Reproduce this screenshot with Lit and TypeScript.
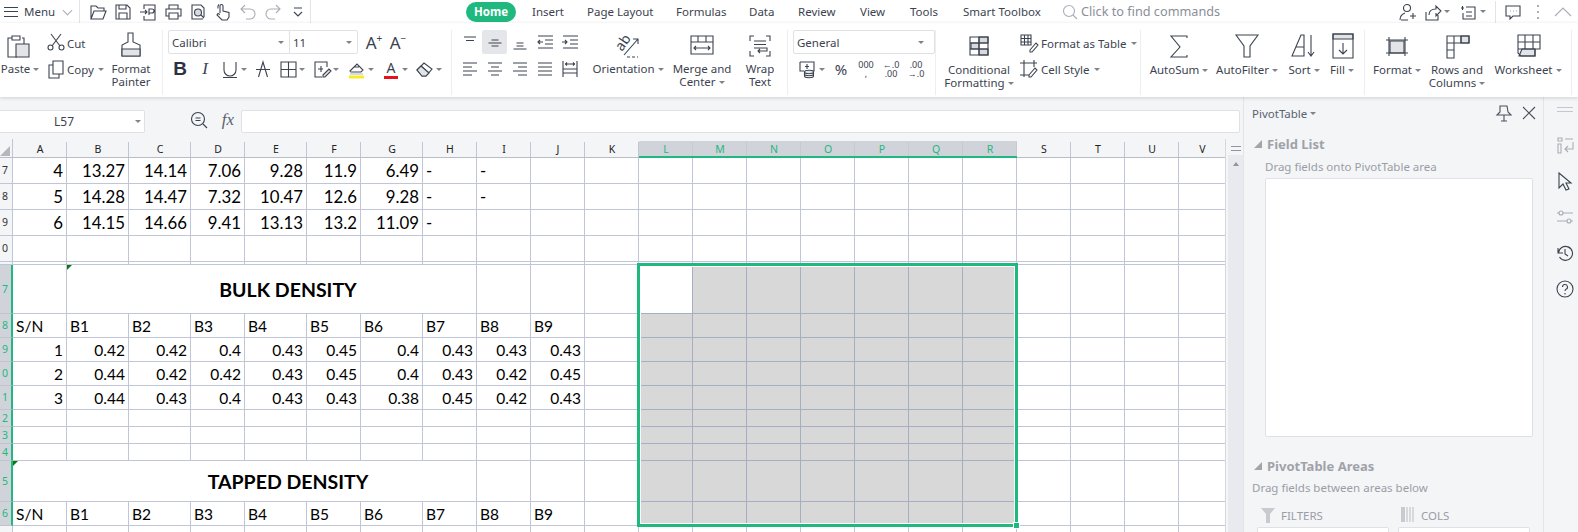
import { LitElement, html, css, svg } from 'lit';
import { customElement } from 'lit/decorators.js';

const ICONS: Record<string, unknown> = {
  open: svg`<path d="M3 17V4h5l2 2h6v3M3 17l3-8h12l-3 8z"/>`,
  save: svg`<path d="M3 3h11l3 3v11H3zM6 3v4h7V3M6 17v-6h8v6"/>`,
  pdf: svg`<path d="M6 7V3h11v15H6v-4M2 10h7M7 8l2 2-2 2M11 13V7h3a2 2 0 0 1 0 4h-3"/>`,
  print: svg`<path d="M6 7V3h9v4M6 14H3V7h15v7h-3M6 11h9v6H6z"/>`,
  preview: svg`<path d="M15 17H4V3h9l3 3v9"/><circle cx="10" cy="10.500" r="3.500" fill="#d8dade"/><path d="M13 13l3 3"/>`,
  hand: svg`<path d="M7 11V4a1.500 1.500 0 0 1 3 0v5l6 1.500V15l-2 3H9l-5-5 1-1.500 2 1M6 2.500a4 4 0 0 0-1 4"/>`,
  undo: svg`<path class="dim" d="M7 3L3 7l4 4M3 7h9a4.500 4.500 0 0 1 0 10H8"/>`,
  redo: svg`<path class="dim" d="M13 3l4 4-4 4M17 7H8a4.500 4.500 0 0 0 0 10h4"/>`,
  more: svg`<path d="M6 6h8M6 10l4 4 4-4"/>`,
  search: svg`<circle cx="9" cy="9" r="5.500"/><path d="M13 13l4 4"/>`,
  user: svg`<circle cx="10" cy="6" r="3.500"/><path d="M3 18c0-4 2-6 5-7M13 14h6M16 11v6M4 18h7"/>`,
  share: svg`<path d="M4 10v8h12v-5M7 13c0-4 3-6 7-6V4l5 5-5 5v-3"/>`,
  note: svg`<path d="M3 6h3M4.500 4v4M8 5h9v12H5v-6M8 10h6M8 14h6"/>`,
  chat: svg`<path d="M3 4h14v10H10l-3 3v-3H3zM7 9h.500M10 9h.500M13 9h.500"/>`,
  kebab: svg`<path class="dim" stroke-width="2" d="M10 3v2M10 9v2M10 15v2"/>`,
  up: svg`<path class="dim" d="M2 14l8-8 8 8"/>`,
  zoomEq: svg`<circle cx="9" cy="9" r="6.500"/><path d="M14 14l4 4M6.500 8h5M6.500 10.500h5"/>`,
  cut: svg`<circle cx="4.500" cy="14.500" r="2.500"/><circle cx="15.500" cy="14.500" r="2.500"/><path d="M6 13L15 1M14 13L5 1"/>`,
  copy: svg`<path d="M7 2h10v13H7zM7 6H3v13h10v-4"/>`,
  under: svg`<path d="M4 3v8a6 6 0 0 0 12 0V3M3 18.500h14"/>`,
  strike: svg`<path d="M3 10.500h14M5.500 18L10 3l4.500 15"/>`,
  bord: svg`<path d="M3 3h15v15H3zM10.500 3v15M3 10.500h15"/>`,
  cellx: svg`<path d="M15 8V3H3v15h7M6 10h5M9 7v6"/><path d="M11 16l6-6 2 2-6 6h-2z" fill="#e2e4e8"/>`,
  fill: svg`<path d="M3 12l7-7 6 6-2 2H4zM7 8h5"/><path d="M3 14h13v2H3z" stroke="none" fill="#d8dade"/><path d="M2 16.500h15v3H2z" stroke="none" fill="#f6ec2a"/>`,
  eraser: svg`<path d="M2 11l7-7 8 6-6 7H7z"/><path d="M6 7l8 7" /><path d="M2 11l5 6h4l3-3-8-7z" fill="#e2e4e8"/>`,
  atop: svg`<path d="M4 5h12M6 8.500h8"/>`,
  amid: svg`<path d="M6.500 8h7M3.500 11h13M6.500 14h7"/>`,
  abot: svg`<path d="M6.500 12h7M6.500 15h7M3.500 18h13" transform="translate(0 -1)"/>`,
  outd: svg`<path d="M3 4h15M10 8h8M10 12h8M3 16h15M8 10H3M5 8l-2 2 2 2"/>`,
  ind: svg`<path d="M3 4h15M10 8h8M10 12h8M3 16h15M2 10h5M5 8l2 2-2 2"/>`,
  left: svg`<path d="M3 4h14M3 8h9M3 12h14M3 16h9"/>`,
  center: svg`<path d="M3 4h14M6 8h8M3 12h14M6 16h8"/>`,
  right: svg`<path d="M3 4h14M8 8h9M3 12h14M8 16h9"/>`,
  just: svg`<path d="M3 4h14M3 8h14M3 12h14M3 16h14"/>`,
  dist: svg`<path d="M3 2v16M17 2v16M6 5h8M7 3.500L5.500 5 7 6.500M13 3.500L14.500 5 13 6.500M3 10h14M3 14h14"/>`,
  coins: svg`<path d="M2 3h14v9h-3M2 3v9h4M9 5v5M7 7.500h4"/><ellipse cx="11" cy="13" rx="4.500" ry="1.700" fill="#e2e4e8"/><path d="M6.500 13v4c0 1 2 1.700 4.500 1.700s4.500-.700 4.500-1.700v-4M6.500 15c0 1 2 1.700 4.500 1.700s4.500-.700 4.500-1.700"/>`,
  tbl: svg`<path d="M2 2h10v10H2zM2 5.500h10M2 9h10M5.500 2v10M9 2v10M11 17l6-7 2 2-6 7h-2z"/>`,
  cstyle: svg`<path d="M5 1v17M15 1v7M1 4h17M1 16h9M10 16l6-7 2 2-6 7h-2z"/>`,
  paste: svg`<path d="M6 6H2v19h9M16 6h2v6M6 4h8v4H6z"/><path d="M10 12h13v13H10z" fill="#e2e4e8"/>`,
  painter: svg`<path d="M12 2h5v9l7 3v11H6V14l6-3z"/><path d="M6 18h18v7H6z" fill="#e2e4e8"/>`,
  merge: svg`<path d="M4 5h22v18H4zM4 11h22M11 5v6M19 5v6M7 17h16M9 15l-2 2 2 2M21 15l2 2-2 2"/>`,
  wrap: svg`<path d="M9 5H5v5M21 5h4v5M9 25H5v-5M21 25h4v-5M9 10h12M9 13.500h12M9 17h13v3h-9M15 18l-2 2 2 2"/>`,
  orient: svg`<text x="9" y="21" transform="rotate(-55 9 21)" class="svgt">ab</text><path d="M11 24L25 8M20 8h5v5"/><path d="M14 26h11" stroke-dasharray="3 2"/>`,
  cond: svg`<path d="M15 6h9v6H15zM15 18h9v6H15zM7 12h8v6H7z" fill="#d8dade"/><path d="M6 6h18v18H6zM6 12h18M6 18h18M15 6v18"/>`,
  sum: svg`<path d="M23 7V5H7l9 11-9 10h16v-2"/>`,
  funnel: svg`<path d="M4 4h22L18 15v11h-6V15z"/>`,
  sort: svg`<path d="M3 25L12 4h3v21zM7 16h8M22 4v20M19 21l3 4 3-4"/>`,
  fillb: svg`<path d="M6 3h20v5H6z" fill="#e2e4e8"/><path d="M6 3h20v24H6zM16 12v11M12 19l4 4 4-4"/>`,
  format: svg`<path d="M8 10h14v12H8z" fill="#e2e4e8"/><path d="M4 9h22M4 22h22M7 6v19M23 6v19"/>`,
  rows: svg`<path d="M19 5h8v7h-8z" fill="#e2e4e8"/><path d="M5 5h22v7H5zM5 5v22h7V5M12 12v7M5 19h7M19 5v7"/>`,
  sheet: svg`<path d="M9 18h13v7H6z" fill="#e2e4e8"/><path d="M5 4h22v14h-5v7H8l-3-3zM5 11h22M12 4v14M20 4v14M5 18h17"/>`,
  pin: svg`<path d="M6 3h7l1 6 3 3H3l3-3zM10 12v6M7 18h6"/>`,
  close: svg`<path d="M4 4l12 12M16 4L4 16"/>`,
  swap: svg`<path class="dim" d="M3 3h4v3H3zM10 4h8M3 9h3v9H3zM18 7v7h-8M13 11l-3 3 3 3"/>`,
  cursor: svg`<path d="M4 2l12 10h-5l3 6-3 1-3-6-4 4z"/>`,
  slide: svg`<path class="dim" d="M2 6h16M2 14h16"/><circle class="dim" cx="6" cy="6" r="2" fill="#f4f5f7"/><circle class="dim" cx="14" cy="14" r="2" fill="#f4f5f7"/>`,
  hist: svg`<path d="M3 5v5h5M3.500 10a7 7 0 1 1 1 4M10 6v5l3 2"/>`,
  help: svg`<circle cx="10" cy="10" r="8"/><path d="M7.500 8a2.500 2.500 0 1 1 3.500 2.300c-.700.400-1 .900-1 1.700M10 14v1.500"/>`,
  tri: svg`<path d="M9 1v8H1z" fill="#a3a5ab" stroke="none"/>`,
  filt: svg`<path d="M2 2h14l-5 6v9H7V8z" fill="#c8cacf" stroke="none"/>`,
  cols: svg`<path d="M2 1h4v15H2z" fill="#c8cacf" stroke="none"/><path d="M8 1v15M11 1v15M14 1v15" stroke="#c0c2c8"/>`,
};

const icon = (name: string, size = 20) =>
  html`<svg class="ic" width=${size} height=${size} viewBox="0 0 ${size} ${size}">${ICONS[name]}</svg>`;
const caret = html`<i class="caret"></i>`;

type SheetRow = { label: string; sel?: boolean; cells?: string[]; large?: boolean; title?: string; span?: number };

const COLS = 'ABCDEFGHIJKLMNOPQRSTUV'.split('');
const BS = ['S/N', 'B1', 'B2', 'B3', 'B4', 'B5', 'B6', 'B7', 'B8', 'B9'];
const ROWS: SheetRow[] = [
  { label: '7', large: true, cells: ['4', '13.27', '14.14', '7.06', '9.28', '11.9', '6.49', '-', '-'] },
  { label: '8', large: true, cells: ['5', '14.28', '14.47', '7.32', '10.47', '12.6', '9.28', '-', '-'] },
  { label: '9', large: true, cells: ['6', '14.15', '14.66', '9.41', '13.13', '13.2', '11.09', '-'] },
  { label: '0' },
  { label: '' },
  { label: '7', sel: true, title: 'BULK DENSITY', span: 7 },
  { label: '8', sel: true, cells: BS },
  { label: '9', sel: true, cells: ['1', '0.42', '0.42', '0.4', '0.43', '0.45', '0.4', '0.43', '0.43', '0.43'] },
  { label: '0', sel: true, cells: ['2', '0.44', '0.42', '0.42', '0.43', '0.45', '0.4', '0.43', '0.42', '0.45'] },
  { label: '1', sel: true, cells: ['3', '0.44', '0.43', '0.4', '0.43', '0.43', '0.38', '0.45', '0.42', '0.43'] },
  { label: '2', sel: true },
  { label: '3', sel: true },
  { label: '4', sel: true },
  { label: '5', sel: true, title: 'TAPPED DENSITY', span: 8 },
  { label: '6', sel: true, cells: BS },
  { label: '' },
];

@customElement('app-root')
export class AppRoot extends LitElement {
  static styles = css`
    :host {
      display: block;
      width: 1578px;
      height: 532px;
      overflow: hidden;
      background: #f4f5f7;
      color: #3c4350;
      font-family: "Noto Sans", sans-serif;
      font-size: 11.5px;
      line-height: 13px;
    }
    .ic { fill: none; stroke: #3c4350; stroke-width: 1.1; flex: none; display: block; overflow: visible; }
    .ic .dim { stroke: #a9adb5; }
    .svgt { font-size: 14px; fill: #3c4350; stroke: none; font-family: "Noto Sans", sans-serif; }
    .caret {
      display: inline-block;
      width: 0;
      height: 0;
      margin-left: 3px;
      vertical-align: 2px;
      border: 3px solid transparent;
      border-top: 3px solid #7d828c;
      border-bottom: 0;
      flex: none;
    }

    .top {
      height: 23px;
      display: flex;
      align-items: center;
      background: #fff;
    }
    .menu { width: 80px; flex: none; display: flex; align-items: center; padding-left: 4px; box-sizing: border-box; height: 23px; border-right: 1px solid #e2e4e8; }
    .burger { width: 14px; height: 10px; border-top: 1px solid #3c4350; border-bottom: 1px solid #3c4350; margin-right: 6px; box-sizing: border-box; }
    .burger::after { content: ""; display: block; height: 1px; margin-top: 3.500px; background: #3c4350; }
    .chev { width: 6px; height: 6px; border: solid #a9adb5; border-width: 0 1px 1px 0; transform: rotate(45deg); margin: -3px 0 0 9px; }
    .quick { width: 231px; flex: none; padding-left: 5px; height: 23px; display: flex; align-items: center; box-sizing: border-box; border-right: 1px solid #e2e4e8; }
    .quick span { width: 25px; display: flex; justify-content: center; }
    .tabs { margin-left: 155px; flex: none; display: grid; grid-template-columns: 66px 55px 89px 73px 49px 62px 50px 53px 97px; align-items: center; color: #3c4350; white-space: nowrap; }
    .tabs .on { background: #1fb97f; color: #fff; font-weight: 700; width: 50px; height: 20px; line-height: 20px; text-align: center; border-radius: 10px; }
    .find { width: 337px; flex: none; display: flex; align-items: center; color: #8a8f99; font-size: 12.7px; }
    .find .ic { stroke: #a9adb5; margin-right: 1px; }
    .acts { display: flex; align-items: center; flex: none; width: 180px; }
    .acts .t { width: 25px; flex: none; }
    .acts .tc { width: 36px; flex: none; display: flex; align-items: center; }
    .acts .tc .caret { margin-left: 2px; }
    .vd { width: 1px; height: 22px; background: #e2e4e8; margin: 0 7px 0 1px; flex: none; }

    .ribbon {
      position: relative;
      z-index: 2;
      height: 74px;
      padding-top: 7px;
      box-sizing: border-box;
      display: flex;
      align-items: flex-start;
      background: #fff;
      box-shadow: 0 1px 4px rgba(0, 0, 0, 0.16);
    }
    .grp { height: 65px; display: flex; border-right: 1px solid #eceef0; box-sizing: border-box; flex: none; }
    .g1 { width: 163px; }
    .g2 { width: 289px; padding-left: 5px; flex-direction: column; }
    .g3 { width: 336px; padding-left: 5px; }
    .g4 { width: 148px; padding-left: 5px; flex-direction: column; }
    .g5 { width: 205px; padding-left: 7px; }
    .g6 { width: 224px; padding-left: 8px; }
    .g7 { width: 207px; padding-left: 6px; }
    .big { display: flex; flex-direction: column; align-items: center; text-align: center; flex: none; white-space: nowrap; }
    .big .bi { height: 32px; display: flex; align-items: center; justify-content: center; }
    .low .lbl { padding-top: 1px; }
    .w-paste { width: 40px; }
    .w-paint { width: 38px; }
    .w-orient { width: 70px; margin-left: 11px; }
    .w-merge { width: 64px; margin-left: 7px; }
    .w-wrap { width: 40px; margin-left: 6px; }
    .w-cond { width: 72px; }
    .w-sum { width: 60px; }
    .w-filter { width: 62px; margin-left: 7px; }
    .w-sort { width: 36px; margin-left: 8px; }
    .w-fill { width: 28px; margin-left: 6px; }
    .w-fmt { width: 52px; }
    .w-rows { width: 58px; margin-left: 5px; }
    .w-sheet { width: 66px; margin-left: 9px; }
    .cutcopy { width: 66px; margin-left: 6px; display: flex; flex-direction: column; }
    .cutcopy div { display: flex; align-items: center; gap: 1px; height: 26px; }
    .stylecol { margin-left: 4px; display: flex; flex-direction: column; }
    .stylecol div { display: flex; align-items: center; gap: 2px; height: 26px; white-space: nowrap; }

    .comborow { display: flex; align-items: center; }
    .combo { height: 24px; display: flex; align-items: center; border: 1px solid #dfe1e6; border-radius: 2px; box-sizing: border-box; background: #fff; }
    .combo span { display: flex; align-items: center; justify-content: space-between; height: 22px; padding: 0 5px 0 3px; box-sizing: border-box; }
    .combo .cf { width: 121px; border-right: 1px solid #dfe1e6; }
    .combo .cs { width: 67px; }
    .combo .cn { width: 135px; }
    .aa { width: 20px; margin-left: 4px; font-size: 17px; text-align: center; }
    .aa sup { font-size: 10px; line-height: 0; }
    .aa.first { margin-left: 6px; }
    .tools { display: flex; align-items: center; height: 24px; margin-top: 3px; padding-left: 2px; }
    .tool { display: flex; align-items: center; flex: none; }
    .tool .caret { margin-left: 1px; vertical-align: 0; }
    .tl { width: 20px; text-align: center; }
    .w25 { width: 25px; }
    .w33 { width: 33px; }
    .w34 { width: 34px; }
    .w35 { width: 35px; }
    .num-first { margin-left: 3px; }
    .bold { font: 700 19px/20px "Liberation Sans", sans-serif; color: #2d3340; }
    .ital { font: italic 17px/20px "Liberation Serif", serif; }
    .red { font-size: 14px; line-height: 17px; border-bottom: 3px solid #e8121e; width: 14px; margin: 0 3px; }
    .pct { font-size: 15px; line-height: 20px; }
    .stack { font-size: 9px; line-height: 9px; white-space: nowrap; }

    .aligngrid { display: grid; grid-template-columns: repeat(5, 25px); grid-auto-rows: 24px; row-gap: 3px; flex: none; }
    .aligngrid span { display: flex; align-items: center; justify-content: center; }
    .aligngrid .act { background: #e4e6ea; border-radius: 2px; }

    .main { display: flex; height: 435px; }
    .left { width: 1243px; flex: none; }
    .fbar { height: 42px; padding-top: 13px; box-sizing: border-box; display: flex; align-items: flex-start; }
    .name { width: 145px; height: 23px; border: 1px solid #dfe1e6; border-left: 0; border-radius: 0 2px 2px 0; background: #fff; box-sizing: border-box; display: flex; align-items: center; padding: 0 3px 0 54px; justify-content: space-between; font-size: 12px; }
    .zoomi { margin-left: 44px; margin-right: 7px; }
    .fx { font: italic 17px/22px "Liberation Serif", serif; width: 24px; text-align: center; color: #5a606c; margin-top: -1px; }
    .input { width: 999px; margin-left: 1px; height: 23px; background: #fff; border: 1px solid #dfe1e6; border-radius: 2px; box-sizing: border-box; }
    .body { display: flex; height: 393px; }

    .sheet {
      position: relative;
      width: 1226px;
      height: 393px;
      overflow: hidden;
      flex: none;
      background: #fff;
      display: grid;
      grid-template-columns: 13px 54px 62px 62px 54px 62px 54px 62px repeat(14, 54px) 47px;
      grid-template-rows: 19px 26px 26px 26px 26px 3px 49px 24px 24px 24px 24px 17px 17px 17px 41px 24px 24px;
      border-right: 1px solid #d5d8de;
      box-sizing: border-box;
      font-family: Lato, sans-serif;
      color: #000;
    }
    .corner { background: #f4f5f7; border-bottom: 1px solid #b9bdc8; border-right: 1px solid #c0c6d8; box-sizing: border-box; display: flex; align-items: flex-end; padding-bottom: 1px; }
    .corner b { width: 0; height: 0; border-left: 10px solid transparent; border-bottom: 10px solid #b4b7bd; }
    .hd { background: #f4f5f7; border-bottom: 1px solid #b9bdc8; box-sizing: border-box; text-align: center; font: 10.500px/21px "Noto Sans", sans-serif; color: #222; position: relative; }
    .hd::after { content: ""; position: absolute; right: 0; top: 3px; bottom: 0; width: 1px; background: #c0c6d8; }
    .hd.sel { background: linear-gradient(#f4f5f7 2px, #d0d3da 2px); border-bottom: 2px solid #1fb97f; color: #1fb97f; }
    .hd.sel::after { background: #c6cad3; }
    .rh { background: #f4f5f7; border-right: 1px solid #c0c6d8; border-bottom: 1px solid #c0c6d8; box-sizing: border-box; font: 10.500px/1 "Noto Sans", sans-serif; color: #333; display: flex; align-items: center; overflow: hidden; padding-left: 2px; }
    .rh.sel { background: #d0d3da; color: #1fb97f; border-right: 2px solid #1fb97f; border-bottom-color: #c0c4cd; }
    .c { border-right: 1px solid #c0c6d8; border-bottom: 1px solid #c0c6d8; box-sizing: border-box; font-size: 15.500px; line-height: 1; display: flex; align-items: center; padding: 1.500px 3px 0; white-space: nowrap; overflow: hidden; position: relative; min-width: 0; }
    .c.lg { font-size: 16.800px; }
    .c.num { justify-content: flex-end; }
    .c.sel { background: #d8d8d8; border-color: #a6aec2; }
    .c.act { background: #fff; }
    .c.title { font-weight: 700; font-size: 19.500px; justify-content: center; }
    .s7 { grid-column: span 7; padding-left: 36px; }
    .s8 { grid-column: span 8; padding-left: 90px; }
    .flag { position: absolute; left: 0; top: 0; width: 0; height: 0; border-top: 5px solid #0a7a0a; border-right: 5px solid transparent; }
    .selbox { position: absolute; left: 637px; top: 124px; width: 381px; height: 264px; box-sizing: border-box; border: 3px solid #1fb97f; box-shadow: inset 0 0 0 1px #fff; pointer-events: none; }
    .grip { position: absolute; right: -5px; bottom: -5px; width: 5px; height: 5px; background: #1fb97f; border: 1px solid #fff; }

    .vscroll { width: 15px; margin-left: 2px; flex: none; display: flex; flex-direction: column; }
    .vtop { height: 16px; display: flex; flex-direction: column; align-items: center; padding-top: 7px; box-sizing: border-box; }
    .vtop i { width: 10px; height: 3px; border: solid #8f95a3; border-width: 1px 0; }
    .vtrack { flex: 1; background: #e8eaef; display: flex; justify-content: center; padding-top: 7px; }
    .vtrack i { width: 0; height: 0; border: 3px solid transparent; border-bottom: 4px solid #8f95a3; border-top: 0; }

    .pane { width: 301px; flex: none; border-left: 1px solid #e2e4e8; border-right: 1px solid #e2e4e8; box-sizing: border-box; padding-left: 8px; color: #9b9da6; }
    .ptitle { margin-top: 8px; height: 16px; display: flex; align-items: center; color: #5b6270; }
    .ptitle .ic { stroke: #4a505c; }
    .ptitle .pin { margin-left: auto; }
    .pclose { margin: 0 4px 0 5px; }
    .phead { height: 16px; display: flex; align-items: center; gap: 4px; margin-top: 15px; font-size: 13px; font-weight: 700; color: #a0a2a9; padding-left: 1px; }
    .phead.b { margin-top: 21px; }
    .pdrag { line-height: 14px; margin-top: 8px; padding-left: 13px; }
    .pdrag.b { padding-left: 0; margin-top: 7px; }
    .pbox { width: 268px; height: 259px; margin: 4px 0 0 13px; background: #fff; border: 1px solid #dfe1e6; border-radius: 2px; box-sizing: border-box; }
    .pfl { display: flex; margin-top: 13px; height: 14px; align-items: center; }
    .pfl div { display: flex; align-items: center; width: 140px; padding-left: 7px; gap: 4px; box-sizing: border-box; }
    .pboxes { display: flex; gap: 9px; margin: 5px 0 0 5px; }
    .pboxes div { width: 132px; height: 30px; background: #fff; border: 1px solid #dfe1e6; border-radius: 2px; box-sizing: border-box; }

    .strip { width: 34px; flex: none; padding-left: 8px; box-sizing: border-box; display: flex; flex-direction: column; align-items: center; }
    .strip .lines { width: 16px; height: 3px; border: solid #c4c7ce; border-width: 1px 0; margin: 10px 0 23px; }
    .strip .ic { margin-bottom: 16px; }
  `;

  private big(name: string, cls: string, label: unknown, size = 30) {
    return html`<div class="big ${cls}"><div class="bi">${icon(name, size)}</div><div class="lbl">${label}</div></div>`;
  }

  private renderRibbon() {
    return html`
      <div class="ribbon">
        <div class="grp g1">
          ${this.big('paste', 'w-paste', html`Paste${caret}`, 28)}
          <div class="cutcopy">
            <div>${icon('cut')}Cut</div>
            <div>${icon('copy')}Copy${caret}</div>
          </div>
          ${this.big('painter', 'w-paint', html`Format<br />Painter`)}
        </div>
        <div class="grp g2">
          <div class="comborow">
            <div class="combo">
              <span class="cf">Calibri${caret}</span>
              <span class="cs">11${caret}</span>
            </div>
            <div class="aa first">A<sup>+</sup></div>
            <div class="aa">A<sup>−</sup></div>
          </div>
          <div class="tools">
            <div class="tool w25"><div class="tl bold">B</div></div>
            <div class="tool w25"><div class="tl ital">I</div></div>
            <div class="tool w33">${icon('under')}${caret}</div>
            <div class="tool w25">${icon('strike')}</div>
            <div class="tool w34">${icon('bord')}${caret}</div>
            <div class="tool w35">${icon('cellx')}${caret}</div>
            <div class="tool w34">${icon('fill')}${caret}</div>
            <div class="tool w34"><div class="tl red">A</div>${caret}</div>
            <div class="tool">${icon('eraser')}${caret}</div>
          </div>
        </div>
        <div class="grp g3">
          <div class="aligngrid">
            <span>${icon('atop')}</span><span class="act">${icon('amid')}</span><span>${icon('abot')}</span><span>${icon('outd')}</span><span>${icon('ind')}</span>
            <span>${icon('left')}</span><span>${icon('center')}</span><span>${icon('right')}</span><span>${icon('just')}</span><span>${icon('dist')}</span>
          </div>
          ${this.big('orient', 'w-orient', html`Orientation${caret}`)}
          ${this.big('merge', 'w-merge', html`Merge and<br />Center${caret}`)}
          ${this.big('wrap', 'w-wrap', html`Wrap<br />Text`)}
        </div>
        <div class="grp g4">
          <div class="combo"><span class="cn">General${caret}</span></div>
          <div class="tools">
            <div class="tool w33 num-first">${icon('coins')}${caret}</div>
            <div class="tool w25"><div class="tl pct">%</div></div>
            <div class="tool w25"><div class="tl stack">000<br />,</div></div>
            <div class="tool w25"><div class="tl stack">←.0<br />.00</div></div>
            <div class="tool w25"><div class="tl stack">.00<br />→.0</div></div>
          </div>
        </div>
        <div class="grp g5 low">
          ${this.big('cond', 'w-cond', html`Conditional<br />Formatting${caret}`)}
          <div class="stylecol">
            <div>${icon('tbl')}Format as Table${caret}</div>
            <div>${icon('cstyle')}Cell Style${caret}</div>
          </div>
        </div>
        <div class="grp g6 low">
          ${this.big('sum', 'w-sum', html`AutoSum${caret}`)}
          ${this.big('funnel', 'w-filter', html`AutoFilter${caret}`)}
          ${this.big('sort', 'w-sort', html`Sort${caret}`)}
          ${this.big('fillb', 'w-fill', html`Fill${caret}`)}
        </div>
        <div class="grp g7 low">
          ${this.big('format', 'w-fmt', html`Format${caret}`)}
          ${this.big('rows', 'w-rows', html`Rows and<br />Columns${caret}`)}
          ${this.big('sheet', 'w-sheet', html`Worksheet${caret}`)}
        </div>
      </div>
    `;
  }

  private renderSheet() {
    const cells: unknown[] = [];
    ROWS.forEach((r) => {
      cells.push(html`<div class="rh ${r.sel ? 'sel' : ''}">${r.label}</div>`);
      if (r.title) {
        // merged title cells: B..H on row 47, A..H on row 55
        if (r.span === 7) cells.push(html`<div class="c"></div>`);
        cells.push(html`<div class="c title s${r.span}"><i class="flag"></i>${r.title}</div>`);
      }
      for (let ci = r.title ? 8 : 0; ci < COLS.length; ci++) {
        const v = r.cells?.[ci] ?? '';
        const num = v !== '' && !isNaN(Number(v));
        const inSel = !!r.sel && ci >= 11 && ci <= 17;
        const active = inSel && ci === 11 && r.title === 'BULK DENSITY';
        const cls = ['c', r.large ? 'lg' : '', num ? 'num' : '', inSel ? 'sel' : '', active ? 'act' : ''].join(' ');
        cells.push(html`<div class=${cls}>${v}</div>`);
      }
    });
    return html`
      <div class="sheet">
        <div class="corner"><b></b></div>
        ${COLS.map((c, i) => html`<div class="hd ${i >= 11 && i <= 17 ? 'sel' : ''}">${c}</div>`)}
        ${cells}
        <div class="selbox"><div class="grip"></div></div>
      </div>
    `;
  }

  render() {
    return html`
      <div class="top">
        <div class="menu"><div class="burger"></div>Menu<div class="chev"></div></div>
        <div class="quick">
          ${['open', 'save', 'pdf', 'print', 'preview', 'hand', 'undo', 'redo', 'more'].map((n) => html`<span>${icon(n)}</span>`)}
        </div>
        <div class="tabs">
          <div class="on">Home</div><div>Insert</div><div>Page Layout</div><div>Formulas</div><div>Data</div>
          <div>Review</div><div>View</div><div>Tools</div><div>Smart Toolbox</div>
        </div>
        <div class="find">${icon('search')}<div>Click to find commands</div></div>
        <div class="acts">
          <div class="t">${icon('user')}</div>
          <div class="tc">${icon('share')}${caret}</div>
          <div class="tc">${icon('note')}${caret}</div>
          <div class="vd"></div>
          <div class="t">${icon('chat')}</div>
          <div class="t">${icon('kebab')}</div>
          <div class="t">${icon('up')}</div>
        </div>
      </div>
      ${this.renderRibbon()}
      <div class="main">
        <div class="left">
          <div class="fbar">
            <div class="name">L57${caret}</div>
            <div class="zoomi">${icon('zoomEq')}</div>
            <div class="fx">fx</div>
            <div class="input"></div>
          </div>
          <div class="body">
            ${this.renderSheet()}
            <div class="vscroll">
              <div class="vtop"><i></i></div>
              <div class="vtrack"><i></i></div>
            </div>
          </div>
        </div>
        <div class="pane">
          <div class="ptitle">PivotTable${caret}<span class="pin">${icon('pin')}</span><span class="pclose">${icon('close')}</span></div>
          <div class="phead">${icon('tri', 10)}Field List</div>
          <div class="pdrag">Drag fields onto PivotTable area</div>
          <div class="pbox"></div>
          <div class="phead b">${icon('tri', 10)}PivotTable Areas</div>
          <div class="pdrag b">Drag fields between areas below</div>
          <div class="pfl">
            <div>${icon('filt', 18)}FILTERS</div>
            <div>${icon('cols', 18)}COLS</div>
          </div>
          <div class="pboxes"><div></div><div></div></div>
        </div>
        <div class="strip">
          <div class="lines"></div>
          ${icon('swap')}${icon('cursor')}${icon('slide')}${icon('hist')}${icon('help')}
        </div>
      </div>
    `;
  }
}
